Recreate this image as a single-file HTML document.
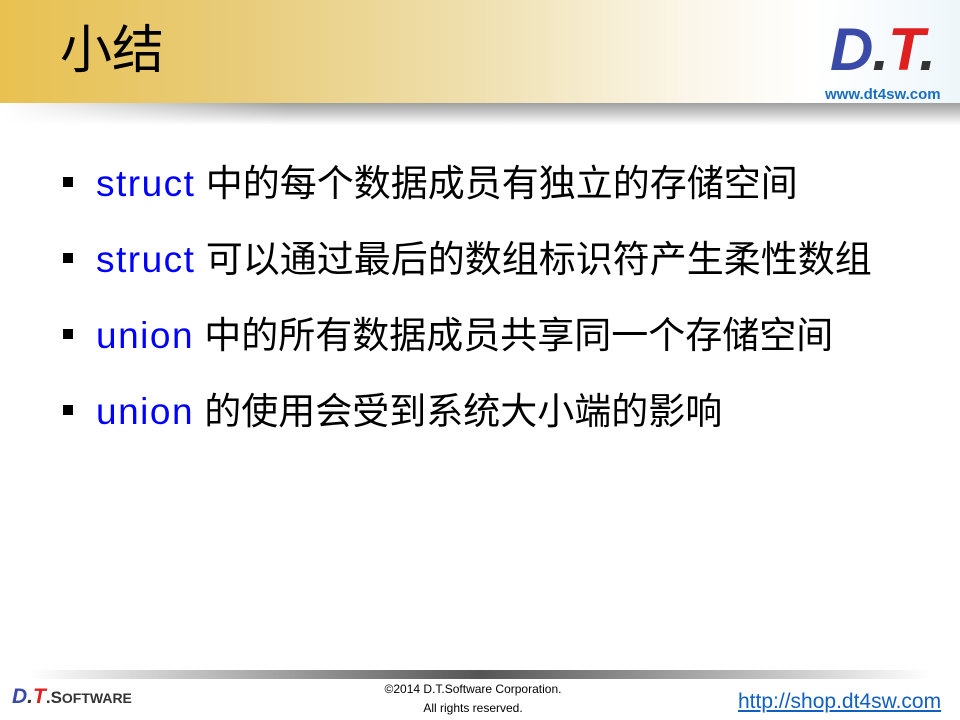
<!DOCTYPE html>
<html><head><meta charset="utf-8"><style>
body{margin:0;width:960px;height:720px;overflow:hidden;background:#fff;position:relative;font-family:"Liberation Sans","Noto Sans CJK SC",sans-serif}
.hdr{position:absolute;left:0;top:0;width:960px;height:103px;background:linear-gradient(90deg,#e8c150 0%,#e8cc7a 25%,#efe0b0 50%,#fbf6ea 72%,#ffffff 85%,#eef6fa 100%)}
.shadow{position:absolute;left:0;top:103px;width:960px;height:22px;background:linear-gradient(180deg,rgba(80,80,80,.55),rgba(255,255,255,0));}
.shadow:after{content:"";position:absolute;inset:0;background:linear-gradient(90deg,#fff 0%,rgba(255,255,255,0) 30%,rgba(255,255,255,0) 100%)}
.title{position:absolute;left:60px;top:19px;font-size:52px;color:#000;line-height:64px}
.logo{position:absolute;left:830px;top:20px;font:italic bold 60px "Liberation Sans",sans-serif;line-height:60px;letter-spacing:-1px}
.url{position:absolute;left:825px;top:86px;font:bold 15px "Liberation Sans",sans-serif;color:#1a6fc0}
.li{position:absolute;left:96px;font-size:37px;line-height:44px;color:#000;white-space:nowrap}
.li b{font-weight:normal;color:#0000ff;letter-spacing:1.5px}
.bl{position:absolute;left:63px;width:10px;height:10px;background:#000}
.fbar{position:absolute;left:30px;top:670px;width:900px;height:9px;background:linear-gradient(90deg,#fff,#999 30%,#555 50%,#999 70%,#fff)}
.copy{position:absolute;left:0;width:946px;text-align:center;font-size:12px;color:#000}
</style></head><body>
<div class="hdr"></div><div class="shadow"></div>
<div class="title">小结</div>
<div class="logo"><span style="color:#3a4aa8">D</span><span style="color:#333">.</span><span style="color:#e02020">T</span><span style="color:#333">.</span></div>
<div class="url">www.dt4sw.com</div>
<div class="bl" style="top:177px"></div><div class="li" style="top:162px"><b>struct</b> 中的每个数据成员有独立的存储空间</div>
<div class="bl" style="top:253px"></div><div class="li" style="top:238px"><b>struct</b> 可以通过最后的数组标识符产生柔性数组</div>
<div class="bl" style="top:329px"></div><div class="li" style="top:314px"><b>union</b> 中的所有数据成员共享同一个存储空间</div>
<div class="bl" style="top:405px"></div><div class="li" style="top:390px"><b>union</b> 的使用会受到系统大小端的影响</div>
<div class="fbar"></div>
<div style="position:absolute;left:12px;top:685px;font:italic bold 21px 'Liberation Sans',sans-serif"><span style="color:#3a4aa8">D</span><span style="color:#333">.</span><span style="color:#e02020">T</span><span style="color:#333;font-style:normal;font-size:17px">.S<span style="font-size:14px">OFTWARE</span></span></div>
<div class="copy" style="top:682px">©2014 D.T.Software Corporation.</div>
<div class="copy" style="top:701px">All rights reserved.</div>
<div style="position:absolute;left:738px;top:690px;font-size:21px;color:#1060c0;text-decoration:underline">http://shop.dt4sw.com</div>
</body></html>
